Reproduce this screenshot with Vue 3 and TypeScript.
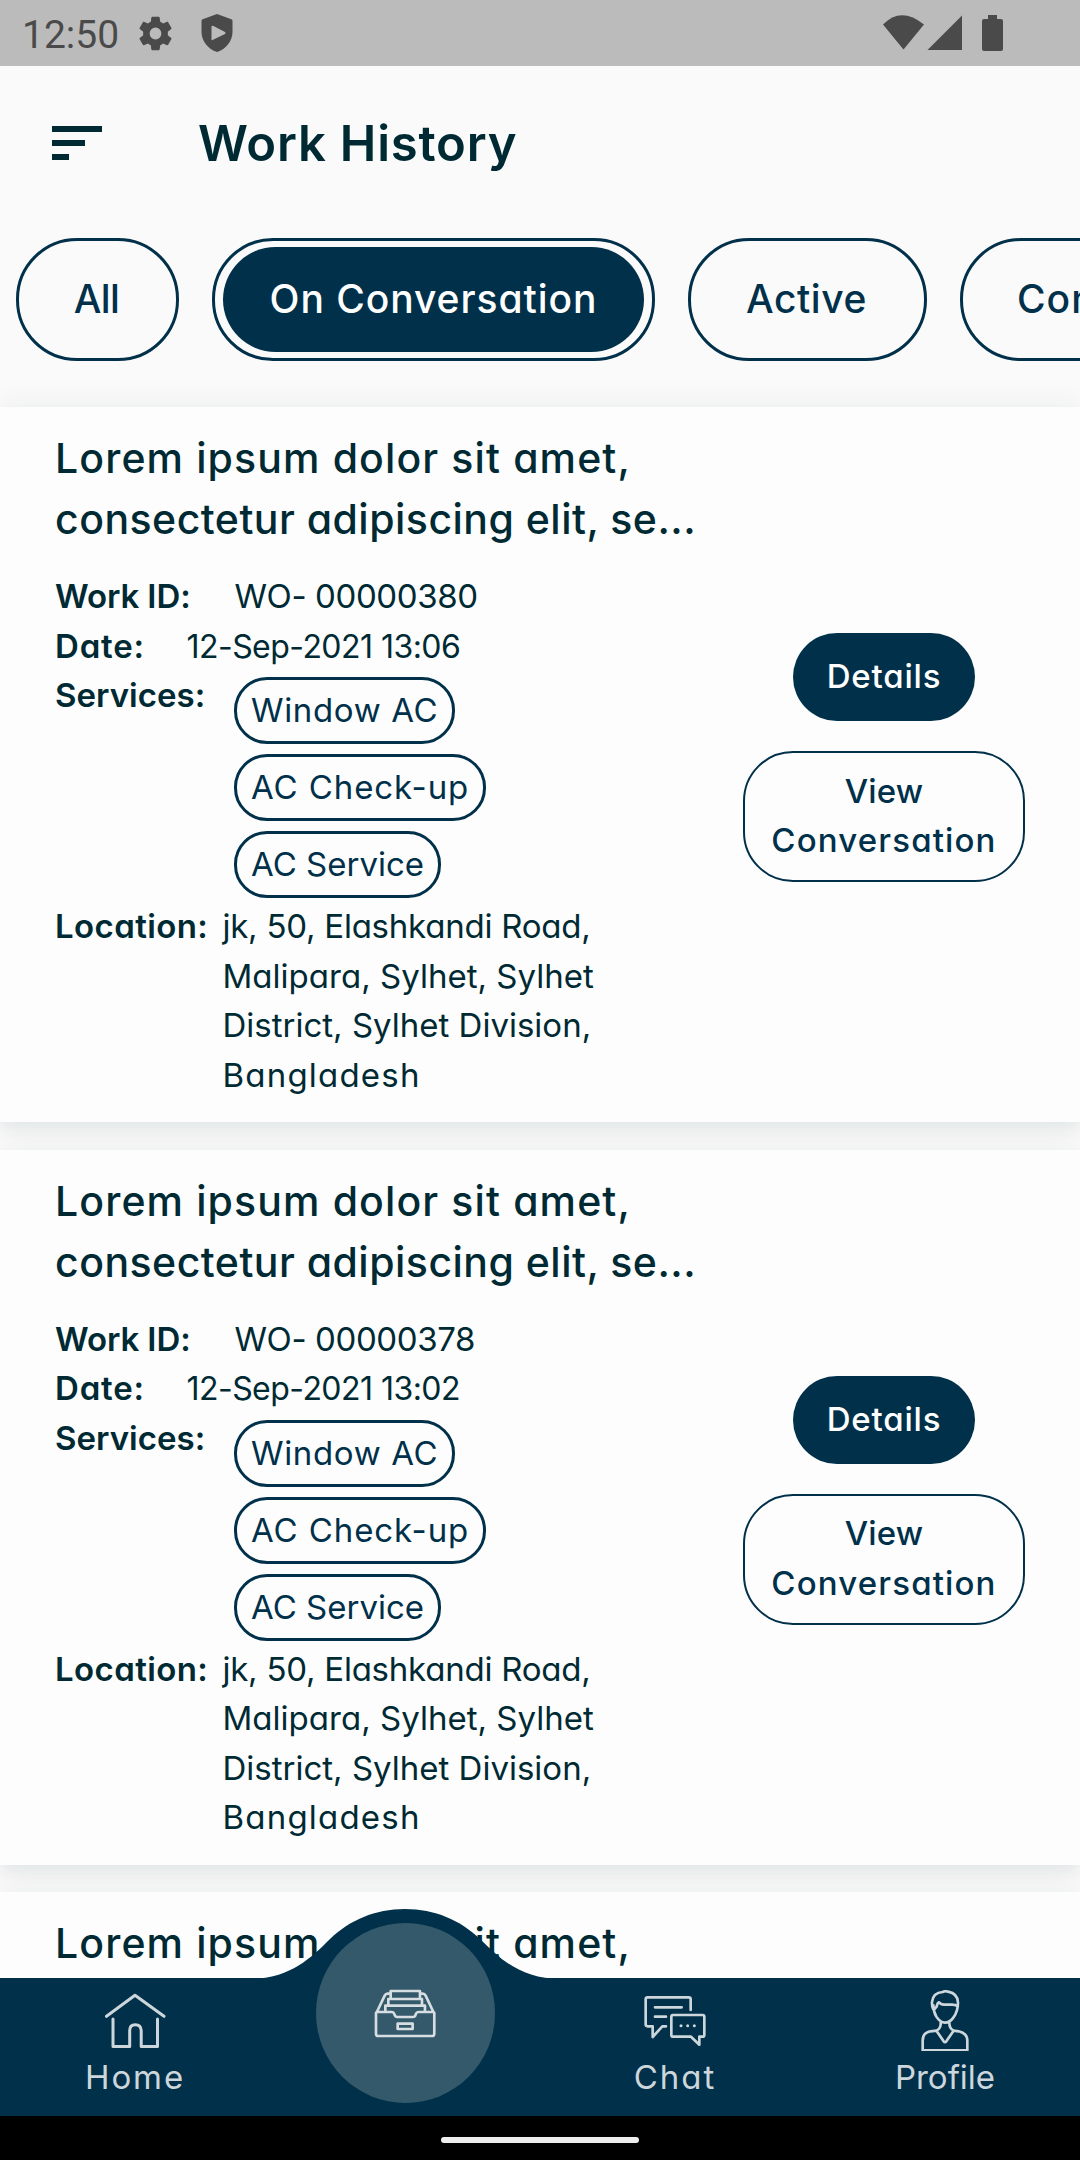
<script setup lang="ts">
interface Line {
  text: string
  track: number
}
interface Work {
  key: number
  lines: Line[]
  id?: string
  date?: string
}

const filters = [
  { label: 'All', cls: 'all', track: -0.59, active: false },
  { label: 'On Conversation', cls: 'conversation', track: 0.95, active: true },
  { label: 'Active', cls: 'ongoing', track: 0.57, active: false },
  { label: 'Completed', cls: 'completed', track: 1, active: false },
]

const titleLines: Line[] = [
  { text: 'Lorem ipsum dolor sit amet,', track: 1.12 },
  { text: 'consectetur adipiscing elit, se...', track: 0.48 },
]
const services: Line[] = [
  { text: 'Window AC', track: 0.65 },
  { text: 'AC Check-up', track: 0.9 },
  { text: 'AC Service', track: 0 },
]
const address: Line[] = [
  { text: 'jk, 50, Elashkandi Road,', track: -0.24 },
  { text: 'Malipara, Sylhet, Sylhet', track: 0.02 },
  { text: 'District, Sylhet Division,', track: 0 },
  { text: 'Bangladesh', track: 1.2 },
]
const works: Work[] = [
  { key: 1, lines: titleLines, id: '00000380', date: '12-Sep-2021 13:06' },
  { key: 2, lines: titleLines, id: '00000378', date: '12-Sep-2021 13:02' },
  { key: 3, lines: titleLines.slice(0, 1) },
]

const spacing = (track: number) => ({ letterSpacing: `${track}px` })
</script>

<template>
  <div class="screen">
    <div class="status">
      <span class="clock">12:50</span>
      <svg class="gear" viewBox="2.4 2 19.2 20" preserveAspectRatio="none">
        <path fill-rule="evenodd" d="M19.14 12.94c.04-.3.06-.61.06-.94 0-.32-.02-.64-.07-.94l2.03-1.58c.18-.14.23-.41.12-.61l-1.92-3.32c-.12-.22-.37-.29-.59-.22l-2.39.96c-.5-.38-1.03-.7-1.62-.94l-.36-2.54c-.04-.24-.24-.41-.48-.41h-3.84c-.24 0-.43.17-.47.41l-.36 2.54c-.59.24-1.13.57-1.62.94l-2.39-.96c-.22-.08-.47 0-.59.22L2.74 8.87c-.12.21-.08.47.12.61l2.03 1.58c-.05.3-.09.63-.09.94s.02.64.07.94l-2.03 1.58c-.18.14-.23.41-.12.61l1.92 3.32c.12.22.37.29.59.22l2.39-.96c.5.38 1.03.7 1.62.94l.36 2.54c.05.24.24.41.48.41h3.84c.24 0 .44-.17.47-.41l.36-2.54c.59-.24 1.13-.56 1.62-.94l2.39.96c.22.08.47 0 .59-.22l1.92-3.32c.12-.22.07-.47-.12-.61l-2.01-1.58zM12 15.4a3.4 3.4 0 1 1 0-6.8 3.4 3.4 0 0 1 0 6.8z" />
      </svg>
      <svg class="shield" viewBox="0 0 32 38">
        <path fill-rule="evenodd" d="M16 0 31 5.5Q31.5 6 31.5 7V18C31.5 27 25 35 16 38 7 35 .5 27 .5 18V7Q.5 6 1 5.5ZM10.5 12.3V25.5Q10.5 26.500 11.500 26L24 20Q25.200 19 24 18L12.500 12Q10.500 11.300 10.500 12.300Z" />
      </svg>
      <svg class="signals" viewBox="883 14 121 38">
        <path d="M883 24.500Q901 6 924 24.500L903.500 49.500Z" />
        <path d="M962 15.500V50H927.500Z" />
        <path d="M988 15H997V19H1001Q1003 19 1003 21V49Q1003 51 1001 51H984Q982 51 982 49V21Q982 19 984 19H988Z" />
      </svg>
    </div>

    <header class="appbar">
      <div class="menu"><i class="bar"></i><i class="bar mid"></i><i class="bar short"></i></div>
      <h1>Work History</h1>
    </header>

    <nav class="filters">
      <div v-for="f in filters" :key="f.label" class="chip" :class="[f.cls, { active: f.active }]">
        <div class="chip-fill" :style="spacing(f.track)">{{ f.label }}</div>
      </div>
    </nav>

    <main class="list">
      <article v-for="w in works" :key="w.key" class="card">
        <div class="info">
          <h2>
            <span v-for="l in w.lines" :key="l.text" :style="spacing(l.track)">{{ l.text }}</span>
          </h2>
          <template v-if="w.id">
            <div class="row"><b class="k-id">Work ID:</b><span class="v-id">WO- {{ w.id }}</span></div>
            <div class="row"><b class="k-date">Date:</b><span class="v-date">{{ w.date }}</span></div>
            <div class="row">
              <b class="k-services">Services:</b>
              <div class="tags">
                <span v-for="s in services" :key="s.text" class="tag" :style="spacing(s.track)">{{ s.text }}</span>
              </div>
            </div>
            <div class="row">
              <b class="k-location">Location:</b>
              <div class="address">
                <span v-for="a in address" :key="a.text" :style="spacing(a.track)">{{ a.text }}</span>
              </div>
            </div>
          </template>
        </div>
        <div v-if="w.id" class="actions">
          <button class="details">Details</button>
          <button class="view"><span class="w1">View</span><span class="w2">Conversation</span></button>
        </div>
      </article>
    </main>

    <nav class="tabs">
      <svg class="bump" viewBox="0 0 300 71">
        <path d="M-6 70C34 70 55 50 75 30 95 11 120 0 150 0S205 11 225 30C245 50 266 70 306 70V71H-6Z" />
      </svg>
      <div class="tab">
        <div class="slot home">
          <svg width="64" height="58" viewBox="103 1992 64 58">
            <path d="M106.500 2016.300 135 1995.300 164 2016.300M113 2019V2046.500H129.700V2030.500Q129.700 2024.700 135.300 2024.700T141.200 2030.500V2046.500H157.500V2019" />
          </svg>
        </div>
        <span class="t-home">Home</span>
      </div>
      <div class="tab">
        <div class="disc">
          <svg width="61.300" height="49.300" viewBox="102 88 184 148" class="thirds">
            <path d="M112 157H156Q161 157 163 163L165 168Q167 172 171 172H219Q224 172 226 168L228 162Q230 157 235 157H280Q283 157 283 161V222Q283 229 276 229H115Q108 229 108 222V161Q108 157 112 157ZM173 192H218V208H173ZM112 154 134 108Q137 102 143 102H149M279 154 257 108Q254 102 248 102H242M152 117V94H240V117M145 137V118H246V137M136 156V138H255V156" />
          </svg>
        </div>
      </div>
      <div class="tab">
        <div class="slot chat">
          <svg width="62" height="50" viewBox="72 78 186 150" class="thirds">
            <path d="M138 169H127L98 201V169H83Q77 169 77 163V88Q77 82 83 82H206Q212 82 212 88V120M105 112H185M105 140H138M159 135H248Q253 135 253 140V194Q253 200 248 200H238V224L213 200H159Q154 200 154 194V140Q154 135 159 135Z" />
            <g class="dots"><circle cx="183" cy="167" r="4.500" /><circle cx="203" cy="167" r="4.500" /><circle cx="223" cy="167" r="4.500" /></g>
          </svg>
        </div>
        <span class="t-chat">Chat</span>
      </div>
      <div class="tab">
        <div class="slot profile">
          <svg width="48" height="61.300" viewBox="93 60 144 184" class="thirds">
            <path d="M130 118Q125 108 126 96C128 76 142 67 158 66Q166 62 174 65C194 69 204 80 204 98 204 116 198 132 190 143 183 153 175 158 165 158 155 158 146 151 139 140Q131 127 130 106M132 119 140 110Q142 99 147 97 152 104 162 104H186Q197 104 202 109M152 158V164Q150 178 139 182L122 184Q98 188 98 212V241H232V212Q232 190 206 184L191 182Q178 176 178 158M139 182 161 214Q165 219 169 214L191 182" />
          </svg>
        </div>
        <span class="t-profile">Profile</span>
      </div>
    </nav>

    <div class="gesture"><i></i></div>
  </div>
</template>

<style>
body { margin: 0; }
</style>

<style scoped>
.screen {
  display: flex;
  flex-direction: column;
  width: 1080px;
  height: 2160px;
  overflow: hidden;
  background: #fafafa;
  color: #002a33;
  font-family: Inter, "Open Sans", sans-serif;
  font-feature-settings: "cv11";
  white-space: nowrap;
}
svg { display: block; flex: none; }

.status {
  display: flex;
  align-items: flex-start;
  height: 66px;
  flex: none;
  background: #bbb;
  fill: #4a4a4a;
  color: #4a4a4a;
}
.clock { width: 117px; padding-left: 22px; font: 39px/70px Roboto, sans-serif; }
.gear { width: 33px; height: 35px; margin-top: 16px; }
.shield { width: 32px; height: 38px; margin: 14px 0 0 29px; }
.signals { width: 121px; height: 38px; margin: 14px 76px 0 auto; }

.appbar { display: flex; height: 172px; flex: none; }
.menu { width: 146px; padding: 60px 0 0 52px; }
.bar { display: block; width: 50px; height: 6px; margin-bottom: 8px; background: #002a33; }
.bar.mid { width: 33px; }
.bar.short { width: 17px; }
h1 { margin: 0; padding-top: 48px; font-size: 49px; line-height: 60px; font-weight: 600; letter-spacing: .8px; }

.filters { display: flex; gap: 33px; height: 123px; flex: none; padding-left: 16px; }
.chip {
  box-sizing: border-box;
  flex: none;
  height: 123px;
  border: 3px solid #00304a;
  border-radius: 61px;
  color: #00304a;
  font-size: 39px;
  font-weight: 500;
}
.chip-fill {
  display: flex;
  align-items: center;
  justify-content: center;
  box-sizing: border-box;
  height: 100%;
  padding: 0 2px 2px 0;
}
.chip.all { width: 163px; }
.chip.conversation { width: 443px; }
.chip.ongoing { width: 239px; }
.chip.completed { width: 322px; }
.chip.completed .chip-fill { justify-content: flex-start; padding-left: 54px; }
.chip.active { padding: 6px 8px; }
.chip.active .chip-fill { padding: 0 0 2px; border-radius: 53px; background: #00304a; color: #fff; }

.list { flex: 1; min-height: 0; overflow: hidden; padding-top: 46px; }
.card {
  display: flex;
  box-sizing: border-box;
  height: 715px;
  margin-bottom: 27.700px;
  padding: 21px 55px 0;
  background: #fdfdfd;
  box-shadow: 0 0 30px rgba(0, 50, 40, .065), 0 8px 14px rgba(0, 48, 74, .06);
}
.info { width: 688px; flex: none; font-size: 33px; line-height: 49.500px; }
h2 { margin: 0 0 22px; font-size: 41px; line-height: 61px; font-weight: 500; }
h2 span, .address span { display: block; }
.row { display: flex; }
b { flex: none; font-weight: 600; }
.k-id { width: 179.500px; letter-spacing: -.09px; }
.k-date { width: 131.500px; letter-spacing: .8px; }
.k-services { width: 179px; letter-spacing: .03px; }
.k-location { width: 167.500px; letter-spacing: .4px; }
.v-id { letter-spacing: -.4px; }
.v-date { font-size: 32px; letter-spacing: -.54px; }
.tags { display: flex; flex-direction: column; align-items: flex-start; gap: 10px; padding: 6px 0 4px; }
.tag {
  box-sizing: border-box;
  height: 67px;
  padding: 6px 14px 0 14px;
  border: 3px solid #00304a;
  border-radius: 33px;
  color: #00304a;
}
.actions { display: flex; flex-direction: column; align-items: center; width: 282px; padding-top: 205px; }
button { box-sizing: border-box; flex: none; padding: 0; font: inherit; font-size: 33px; line-height: 49.500px; font-weight: 500; }
.details { width: 182px; height: 88px; border: 0; border-radius: 44px; background: #00304a; color: #fff; letter-spacing: .8px; }
.view {
  display: flex;
  flex-direction: column;
  align-items: center;
  width: 282px;
  height: 131px;
  margin-top: 30px;
  padding-top: 13.500px;
  border: 2px solid #00304a;
  border-radius: 50px;
  background: transparent;
  color: #00304a;
}
.w1 { letter-spacing: .2px; }
.w2 { letter-spacing: 1.150px; }

.tabs { position: relative; display: flex; height: 138px; flex: none; background: #00304a; color: #ccd6db; }
.bump { position: absolute; left: 255px; top: -69px; width: 300px; height: 71px; overflow: visible; fill: #00304a; }
.tab { position: relative; display: flex; flex-direction: column; align-items: center; width: 270px; }
.slot { height: 80px; box-sizing: border-box; }
.slot svg, .disc svg { fill: none; stroke: #ccd6db; stroke-width: 3; stroke-linecap: round; stroke-linejoin: round; }
.slot svg.thirds, .disc svg.thirds { stroke-width: 8; }
.disc svg { stroke: #d6dee2; }
.slot .dots { fill: #ccd6db; stroke: none; }
.home { padding-top: 14px; }
.chat { padding-top: 18px; }
.profile { padding-top: 12px; }
.tab span { font-size: 33px; line-height: 39px; }
.tab .t-home { letter-spacing: 1.900px; }
.tab .t-chat { letter-spacing: 2px; }
.tab .t-profile { letter-spacing: 0; }
.disc {
  display: flex;
  justify-content: center;
  box-sizing: border-box;
  width: 179px;
  height: 180px;
  margin-top: -55px;
  padding-top: 66px;
  flex: none;
  border-radius: 50%;
  background: #33596b;
}

.gesture { display: flex; justify-content: center; height: 44px; flex: none; background: #000; }
.gesture i { width: 198px; height: 6px; margin-top: 21px; border-radius: 3px; background: #eee; }
</style>
